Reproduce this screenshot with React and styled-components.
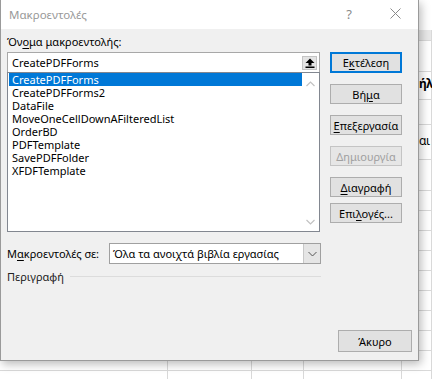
import React from 'react';
import styled, { createGlobalStyle } from 'styled-components';

const GlobalStyle = createGlobalStyle`
  html, body { margin: 0; padding: 0; }
  body {
    width: 432px;
    height: 379px;
    overflow: hidden;
    background: #ffffff;
    font-family: "Noto Sans", "Segoe UI", sans-serif;
    font-size: 11px;
    color: #000;
  }
  * { box-sizing: border-box; }
`;

const macros = [
    'CreatePDFForms',
    'CreatePDFForms2',
    'DataFile',
    'MoveOneCellDownAFilteredList',
    'OrderBD',
    'PDFTemplate',
    'SavePDFFolder',
    'XFDFTemplate',
];

const colWidths = [168, 84, 52, 98, 30];

const sheetRows = [
    { h: 30, kind: 'ribbon' },
    { h: 11, kind: 'head' },
    { h: 31 },
    { h: 28, text: 'ήλ', bold: true, pad: 4 },
    { h: 25 },
    { h: 35, text: 'αι', pad: 8 },
    { h: 31 },
    ...Array.from({ length: 10 }, () => ({ h: 20 })),
];

const App = () => {
    return (
        <React.Fragment>
            <GlobalStyle />
            <Page>
                <Sheet>
                    {sheetRows.map((row, i) => (
                        <SheetRow key={i} $h={row.h} $kind={row.kind}>
                            {row.kind !== 'ribbon' && colWidths.map((w, j) => (
                                <Cell key={j} $w={w} $bold={row.bold} $pad={row.pad || 0}>
                                    {j === colWidths.length - 1 && row.text}
                                </Cell>
                            ))}
                        </SheetRow>
                    ))}
                </Sheet>

                <Dialog>
                    <TitleBar>
                        <Title>Μακροεντολές</Title>
                        <TitleButton>?</TitleButton>
                        <TitleButton>
                            <svg width="11" height="11" viewBox="0 0 11 11">
                                <path d="M0.5 0.5 L10.5 10.5 M10.5 0.5 L0.5 10.5" stroke="#8a8a8a" strokeWidth="1" fill="none" />
                            </svg>
                        </TitleButton>
                    </TitleBar>

                    <Body>
                        <Top>
                            <LeftCol>
                                <Label>Όν<Key>ο</Key>μα μακροεντολής:</Label>
                                <NameInput>
                                    <InputText>CreatePDFForms</InputText>
                                    <UpButton>
                                        <svg width="10" height="10" viewBox="0 0 10 10">
                                            <path d="M5 0.5 L9.5 5 L6.5 5 L6.5 7.5 L3.5 7.5 L3.5 5 L0.5 5 Z" fill="#000" />
                                            <rect x="0.5" y="8.5" width="9" height="1.5" fill="#000" />
                                        </svg>
                                    </UpButton>
                                </NameInput>
                                <ListBox>
                                    <Items>
                                        {macros.map((m, i) => (
                                            <Item key={m} $selected={i === 0}>{m}</Item>
                                        ))}
                                    </Items>
                                    <ScrollBar>
                                        <svg width="9" height="6" viewBox="0 0 9 6">
                                            <path d="M0.5 5 L4.5 1 L8.5 5" stroke="#c2c2c2" strokeWidth="1.2" fill="none" />
                                        </svg>
                                        <svg width="9" height="6" viewBox="0 0 9 6">
                                            <path d="M0.5 1 L4.5 5 L8.5 1" stroke="#c2c2c2" strokeWidth="1.2" fill="none" />
                                        </svg>
                                    </ScrollBar>
                                </ListBox>
                            </LeftCol>

                            <ButtonCol>
                                <Button $default>Ε<Key>κ</Key>τέλεση</Button>
                                <Button>Βή<Key>μ</Key>α</Button>
                                <Button><Key>Ε</Key>πεξεργασία</Button>
                                <Button disabled>Δημιουργία</Button>
                                <Button><Key>Δ</Key>ιαγραφή</Button>
                                <Button $tight>Επι<Key>λ</Key>ογές...</Button>
                            </ButtonCol>
                        </Top>

                        <SelectRow>
                            <SelectLabel>Μ<Key>α</Key>κροεντολές σε:</SelectLabel>
                            <Select>
                                <SelectText>Όλα τα ανοιχτά βιβλία εργασίας</SelectText>
                                <DropButton>
                                    <svg width="9" height="6" viewBox="0 0 9 6">
                                        <path d="M0.5 1 L4.5 5 L8.5 1" stroke="#555" strokeWidth="1" fill="none" />
                                    </svg>
                                </DropButton>
                            </Select>
                        </SelectRow>

                        <DescRow>
                            <span>Περιγραφή</span>
                            <Rule />
                        </DescRow>

                        <Footer>
                            <CancelButton>Άκυρο</CancelButton>
                        </Footer>
                    </Body>
                </Dialog>
            </Page>
        </React.Fragment>
    );
};

const Page = styled.div`
    position: relative;
    width: 432px;
    height: 379px;
    overflow: hidden;
    background: #ffffff;
`;

const Sheet = styled.div`
    display: flex;
    flex-direction: column;
    width: 432px;
`;

const SheetRow = styled.div`
    display: flex;
    height: ${p => p.$h}px;
    flex-shrink: 0;
    background: ${p => (p.$kind === 'head' ? '#e9e9e9' : '#ffffff')};
    border-bottom: ${p => (p.$kind === 'ribbon' ? 'none' : '1px solid #d9d9d9')};
`;

const Cell = styled.div`
    width: ${p => p.$w}px;
    flex-shrink: 0;
    border-right: 1px solid #d9d9d9;
    white-space: nowrap;
    padding: ${p => p.$pad}px 0 0 17px;
    font-family: "Noto Sans", sans-serif;
    font-size: 12px;
    letter-spacing: -0.4px;
    font-weight: ${p => (p.$bold ? 700 : 400)};
    line-height: 16px;
`;

const Dialog = styled.div`
    position: absolute;
    top: 0;
    left: 0;
    width: 419px;
    height: 361px;
    display: flex;
    flex-direction: column;
    background: #f0f0f0;
    border: 1px solid #9a9a9a;
    border-top: none;
    box-shadow: 2px 3px 9px rgba(0, 0, 0, 0.28);
`;

const TitleBar = styled.div`
    display: flex;
    align-items: center;
    height: 29px;
    flex-shrink: 0;
    background: #ffffff;
    padding-left: 8px;
`;

const Title = styled.div`
    flex: 1;
    color: #999999;
    font-size: 11.5px;
    padding-bottom: 1px;
`;

const TitleButton = styled.div`
    width: 46px;
    height: 29px;
    display: flex;
    align-items: center;
    justify-content: center;
    color: #8a8a8a;
    font-size: 13px;
    padding-bottom: 2px;
`;

const Body = styled.div`
    flex: 1;
    display: flex;
    flex-direction: column;
    padding: 0 6px 8px 6px;
`;

const Top = styled.div`
    display: flex;
    align-items: flex-start;
`;

const LeftCol = styled.div`
    width: 313px;
    display: flex;
    flex-direction: column;
`;

const Key = styled.span`
    text-decoration: underline;
    text-underline-offset: 2px;
`;

const Label = styled.div`
    margin-top: 5px;
    height: 18px;
    line-height: 16px;
`;

const NameInput = styled.div`
    display: flex;
    align-items: center;
    height: 20px;
    background: #ffffff;
    border: 1px solid #a8a8a8;
    border-bottom: none;
    padding-left: 4px;
`;

const InputText = styled.div`
    flex: 1;
`;

const UpButton = styled.div`
    width: 15px;
    height: 14px;
    margin-right: 2px;
    display: flex;
    align-items: center;
    justify-content: center;
    background: #e4e4e4;
    border: 1px solid #c4c4c4;
`;

const ListBox = styled.div`
    display: flex;
    height: 160px;
    background: #ffffff;
    border: 1px solid #828790;
`;

const Items = styled.div`
    flex: 1;
    padding: 0 0 0 1px;
`;

const Item = styled.div`
    height: 13px;
    line-height: 13px;
    padding-left: 3px;
    white-space: nowrap;
    background: ${p => (p.$selected ? '#0078d7' : 'transparent')};
    color: ${p => (p.$selected ? '#ffffff' : '#000000')};
`;

const ScrollBar = styled.div`
    width: 17px;
    display: flex;
    flex-direction: column;
    justify-content: space-between;
    align-items: center;
    padding: 8px 0 6px;
    background: #ffffff;
`;

const ButtonCol = styled.div`
    width: 72px;
    margin-left: 10px;
    margin-top: 23px;
    display: flex;
    flex-direction: column;
    gap: 11px;
`;

const Button = styled.button`
    height: ${p => (p.$default ? 21 : 20)}px;
    width: 100%;
    padding: 0;
    margin-top: ${p => (p.$tight ? -5 : 0)}px;
    font-family: inherit;
    font-size: 11px;
    color: #000000;
    background: #e1e1e1;
    border: 1px solid ${p => (p.$default ? '#0078d7' : '#adadad')};
    box-shadow: ${p => (p.$default ? 'inset 0 0 0 1px #0078d7' : 'none')};
    border-radius: 0;

    &:disabled {
        color: #a0a0a0;
        background: #e6e6e6;
        border-color: #c4c4c4;
    }
`;

const SelectRow = styled.div`
    display: flex;
    align-items: center;
    margin-top: 11px;
    width: 314px;
`;

const SelectLabel = styled.div`
    width: 102px;
    flex-shrink: 0;
`;

const Select = styled.div`
    flex: 1;
    display: flex;
    height: 21px;
    background: #ffffff;
    border: 1px solid #a0a0a0;
`;

const SelectText = styled.div`
    flex: 1;
    padding-left: 3px;
    line-height: 19px;
    white-space: nowrap;
`;

const DropButton = styled.div`
    width: 17px;
    display: flex;
    align-items: center;
    justify-content: center;
    background: #e5e5e5;
    border-left: 1px solid #c8c8c8;
`;

const DescRow = styled.div`
    display: flex;
    align-items: center;
    margin-top: 3px;
    width: 314px;
    height: 18px;
    color: #222;
`;

const Rule = styled.div`
    flex: 1;
    height: 1px;
    margin-left: 6px;
    background: #dcdcdc;
`;

const Footer = styled.div`
    margin-top: auto;
    display: flex;
    justify-content: flex-end;
`;

const CancelButton = styled(Button)`
    width: 74px;
    height: 22px;
`;

export default App;
